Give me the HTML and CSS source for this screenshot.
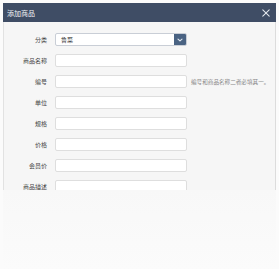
FILE: index.html
```
<!DOCTYPE html>
<html lang="zh">

<head>
    <meta charset="UTF-8">
    <title>添加商品</title>
    <link rel="stylesheet" href="styles.css">
</head>

<body>
    <div class="dialog">
        <!-- Header -->
        <div class="dialog-header">
            <span class="dialog-title">添加商品</span>
            <svg class="close-icon" viewBox="0 0 10 10" fill="none" stroke="#e4e8ee" stroke-width="1.3" stroke-linecap="round">
                <line x1="1" y1="1" x2="9" y2="9"></line>
                <line x1="9" y1="1" x2="1" y2="9"></line>
            </svg>
        </div>

        <!-- Form -->
        <div class="dialog-body">
            <div class="form-row">
                <label class="form-label">分类</label>
                <div class="select-box">
                    <span class="select-text">鲁菜</span>
                    <span class="select-btn">
                        <svg viewBox="0 0 10 10" fill="none" stroke="#dfe6ee" stroke-width="1.4" stroke-linecap="round" stroke-linejoin="round">
                            <polyline points="2.5,3.8 5,6.2 7.5,3.8"></polyline>
                        </svg>
                    </span>
                </div>
            </div>
            <div class="form-row">
                <label class="form-label">商品名称</label>
                <div class="form-input"></div>
            </div>
            <div class="form-row">
                <label class="form-label">编号</label>
                <div class="form-input"></div>
                <span class="form-hint">编号和商品名称二者必填其一。</span>
            </div>
            <div class="form-row">
                <label class="form-label">单位</label>
                <div class="form-input"></div>
            </div>
            <div class="form-row">
                <label class="form-label">规格</label>
                <div class="form-input"></div>
            </div>
            <div class="form-row">
                <label class="form-label">价格</label>
                <div class="form-input"></div>
            </div>
            <div class="form-row">
                <label class="form-label">会员价</label>
                <div class="form-input"></div>
            </div>
            <div class="form-row">
                <label class="form-label">商品描述</label>
                <div class="form-input"></div>
            </div>
        </div>
        <div class="dialog-fade"></div>
    </div>
</body>

</html>
```
FILE: styles.css
```
body {
    margin: 0;
    padding: 0;
    background: #fbfbfb;
    font-family: "Noto Sans CJK SC", "Liberation Sans", sans-serif;
}
/* Dialog */

.dialog {
    margin: 3px 3px 0;
}

.dialog-header {
    display: flex;
    justify-content: space-between;
    align-items: center;
    height: 19px;
    padding: 0 6px 0 4px;
    background-color: #3f4d65;
}

.dialog-title {
    color: #f2f4f7;
    font-size: 7px;
}

.close-icon {
    width: 8px;
    height: 8px;
}

.dialog-body {
    height: 157px;
    padding-top: 11px;
    background-color: #f6f6f6;
    border-left: 1px solid #e2e2e2;
    border-right: 1px solid #dcdcdc;
    overflow: hidden;
    display: flex;
    flex-direction: column;
    gap: 8px;
}

.dialog-fade {
    height: 80px;
    background: linear-gradient(#f8f8f8, #fbfbfb);
}
/* Form rows */

.form-row {
    display: flex;
    align-items: center;
    flex-shrink: 0;
    height: 13px;
}

.form-label {
    width: 43px;
    margin-right: 8px;
    text-align: right;
    font-size: 6px;
    color: #444;
}

.form-input {
    width: 130px;
    height: 11px;
    background: #fff;
    border: 1px solid #dedede;
    border-radius: 2px;
}

.form-hint {
    margin-left: 4px;
    font-size: 5.6px;
    color: #888;
    white-space: nowrap;
}
/* Select */

.select-box {
    display: flex;
    align-items: center;
    width: 130px;
    height: 11px;
    background: #fff;
    border: 1px solid #c9ced6;
    border-radius: 2px;
    overflow: hidden;
}

.select-text {
    flex: 1;
    padding-left: 5px;
    font-size: 6px;
    color: #333;
}

.select-btn {
    display: flex;
    align-items: center;
    justify-content: center;
    width: 12px;
    height: 100%;
    background: #4a6383;
}

.select-btn svg {
    width: 8px;
    height: 8px;
}
```
